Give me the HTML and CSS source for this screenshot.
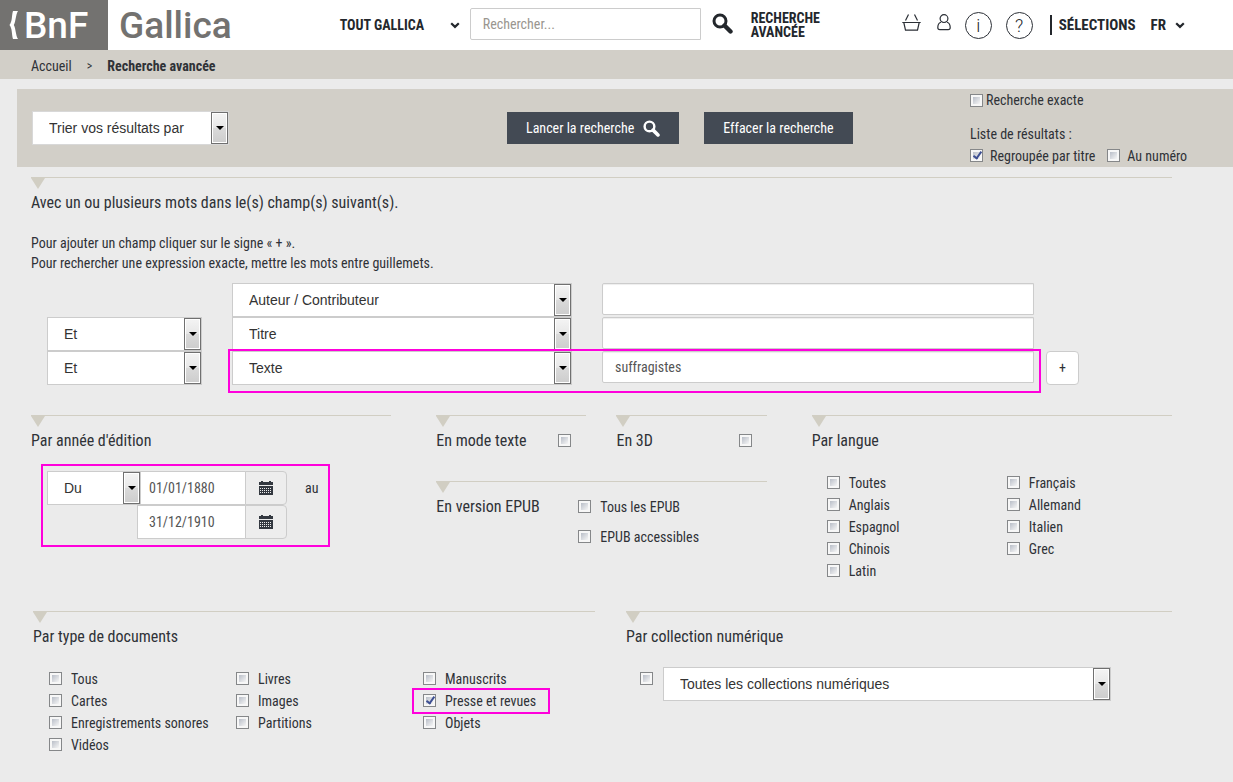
FILE: index.html
```html
<!DOCTYPE html>
<html lang="fr">
<head>
<meta charset="utf-8">
<title>Gallica - Recherche avancée</title>
<link rel="stylesheet" href="styles.css">
</head>
<body>
<svg class="defs" aria-hidden="true">
  <symbol id="magnifier" viewBox="0 0 21 21"><circle cx="8" cy="8" r="6" fill="none" stroke="currentColor" stroke-width="3"/><path d="M12.5 12.5 L18.5 18.5" stroke="currentColor" stroke-width="4.4" stroke-linecap="round"/></symbol>
  <symbol id="chevron" viewBox="0 0 10 7"><path d="M1.2 1.2 L5 4.9 L8.8 1.2" fill="none" stroke="currentColor" stroke-width="2.2"/></symbol>
  <symbol id="calendar" viewBox="0 0 14 14"><path fill="currentColor" d="M0 1h2V0h2v1h6V0h2v1h2v3H0zM0 5h14v9H0z"/><path d="M1 7.500h12M1 9.500h12M1 11.500h12" stroke="#ededed" stroke-width="1" stroke-dasharray="1 1"/></symbol>
</svg>

<header class="topbar">
  <a class="bnf" href="#" aria-label="BnF"><svg class="brace" viewBox="0 0 9 28"><path d="M4 0H9C6.500 4 7 10 4.800 14C7 18 6.500 24 9 28H4C2.500 23 3.500 18 .5 14C3.500 10 2.500 5 4 0z" fill="#fff"/></svg><span>BnF</span></a>
  <a class="gallica" href="#">Gallica</a>
  <div class="search">
    <button class="scope" type="button">TOUT GALLICA <svg class="chevron"><use href="#chevron"/></svg></button>
    <input class="search-box" type="text" placeholder="Rechercher..." aria-label="Rechercher">
    <button class="search-go" type="button" aria-label="Lancer"><svg class="glass-lg"><use href="#magnifier"/></svg></button>
    <a class="advanced" href="#">RECHERCHE<br>AVANCÉE</a>
  </div>
  <nav class="tools">
    <a class="basket" href="#" aria-label="Panier"><svg viewBox="0 0 19 17"><path d="M.3 8.500h18.400M1.800 8.500l1.700 7.700h12l1.700-7.700M3.500 6.500L6.500.5M15.500 6.500L12.500.5" fill="none" stroke="#2b2f36" stroke-width="1.200"/></svg></a>
    <a class="user" href="#" aria-label="Mon espace"><svg viewBox="0 0 14 17"><circle cx="7" cy="4.600" r="3.900" fill="none" stroke="#2b2f36" stroke-width="1.200"/><path d="M4 8.300C1.800 9 .8 11 .8 13.500c0 1.500.8 2.200 2 2.200h8.400c1.200 0 2-.7 2-2.200 0-2.500-1-4.500-3.200-5.200" fill="none" stroke="#2b2f36" stroke-width="1.200"/></svg></a>
    <a class="round" href="#">i</a>
    <a class="round" href="#">?</a>
    <a class="selections" href="#">SÉLECTIONS</a>
    <button class="lang" type="button">FR <svg class="chevron"><use href="#chevron"/></svg></button>
  </nav>
</header>

<nav class="crumbs" aria-label="Fil d'Ariane"><a href="#">Accueil</a><span class="sep">&gt;</span><strong>Recherche avancée</strong></nav>

<form class="page">
  <div class="actions">
    <span class="select sort"><select aria-label="Trier"><option>Trier vos résultats par</option></select></span>
    <div class="buttons">
      <button class="btn" type="button">Lancer la recherche <svg class="glass-sm"><use href="#magnifier"/></svg></button>
      <button class="btn" type="button">Effacer la recherche</button>
    </div>
    <div class="options">
      <label class="exact"><input type="checkbox">Recherche exacte</label>
      <span class="list-title">Liste de résultats :</span>
      <div class="list-modes">
        <label class="check"><input type="checkbox" checked>Regroupée par titre</label>
        <label class="check"><input type="checkbox">Au numéro</label>
      </div>
    </div>
  </div>

  <div class="content">
    <section class="block">
      <h2>Avec un ou plusieurs mots dans le(s) champ(s) suivant(s).</h2>
      <p class="help">Pour ajouter un champ cliquer sur le signe « + ».<br>Pour rechercher une expression exacte, mettre les mots entre guillemets.</p>
      <div class="criteria">
        <div class="pair">
          <span class="select"><select aria-label="Champ 1"><option>Auteur / Contributeur</option></select></span>
          <input class="text" type="text" aria-label="Valeur 1">
        </div>
        <span class="select op"><select aria-label="Opérateur 2"><option>Et</option></select></span>
        <div class="pair">
          <span class="select"><select aria-label="Champ 2"><option>Titre</option></select></span>
          <input class="text" type="text" aria-label="Valeur 2">
        </div>
        <span class="select op"><select aria-label="Opérateur 3"><option>Et</option></select></span>
        <div class="pair marked mark-pair">
          <span class="select"><select aria-label="Champ 3"><option>Texte</option></select></span>
          <input class="text" type="text" value="suffragistes" aria-label="Valeur 3">
        </div>
        <button class="plus" type="button">+</button>
      </div>
    </section>

    <div class="row three">
      <section class="block">
        <h2>Par année d'édition</h2>
        <div class="dates marked mark-dates">
          <div class="date-line">
            <span class="select period"><select aria-label="Période"><option>Du</option></select></span>
            <input class="date" type="text" value="01/01/1880" aria-label="Date de début">
            <button class="cal" type="button" aria-label="Calendrier de début"><svg><use href="#calendar"/></svg></button>
            <span class="until">au</span>
          </div>
          <div class="date-line second">
            <input class="date" type="text" value="31/12/1910" aria-label="Date de fin">
            <button class="cal" type="button" aria-label="Calendrier de fin"><svg><use href="#calendar"/></svg></button>
          </div>
        </div>
      </section>
      <div class="middle">
        <section class="block"><label class="toggle">En mode texte <input type="checkbox"></label></section>
        <section class="block"><label class="toggle">En 3D <input type="checkbox"></label></section>
        <section class="block epub">
          <h2>En version EPUB</h2>
          <div class="epub-list">
            <label class="check"><input type="checkbox">Tous les EPUB</label>
            <label class="check"><input type="checkbox">EPUB accessibles</label>
          </div>
        </section>
      </div>
      <section class="block">
        <h2>Par langue</h2>
        <div class="checks languages">
          <label class="check"><input type="checkbox">Toutes</label>
          <label class="check"><input type="checkbox">Français</label>
          <label class="check"><input type="checkbox">Anglais</label>
          <label class="check"><input type="checkbox">Allemand</label>
          <label class="check"><input type="checkbox">Espagnol</label>
          <label class="check"><input type="checkbox">Italien</label>
          <label class="check"><input type="checkbox">Chinois</label>
          <label class="check"><input type="checkbox">Grec</label>
          <label class="check"><input type="checkbox">Latin</label>
        </div>
      </section>
    </div>

    <div class="row two">
      <section class="block">
        <h2>Par type de documents</h2>
        <div class="checks types">
          <label class="check"><input type="checkbox">Tous</label>
          <label class="check"><input type="checkbox">Livres</label>
          <label class="check"><input type="checkbox">Manuscrits</label>
          <label class="check"><input type="checkbox">Cartes</label>
          <label class="check"><input type="checkbox">Images</label>
          <label class="check marked mark-type"><input type="checkbox" checked>Presse et revues</label>
          <label class="check"><input type="checkbox">Enregistrements sonores</label>
          <label class="check"><input type="checkbox">Partitions</label>
          <label class="check"><input type="checkbox">Objets</label>
          <label class="check"><input type="checkbox">Vidéos</label>
        </div>
      </section>
      <section class="block">
        <h2>Par collection numérique</h2>
        <div class="collection">
          <input type="checkbox" aria-label="Limiter à une collection">
          <span class="select"><select aria-label="Collection"><option>Toutes les collections numériques</option></select></span>
        </div>
      </section>
    </div>
  </div>
</form>
</body>
</html>
```
FILE: styles.css
```css
*, *::before, *::after { box-sizing: border-box; }

body {
  margin: 0;
  background: #ebebeb;
  color: #2f3237;
  font: 14px/22px "Roboto Condensed", "Liberation Sans Narrow", Roboto, sans-serif;
}

a { color: inherit; text-decoration: none; }
button, input { font: inherit; color: inherit; }
button { padding: 0; border: 0; background: none; white-space: nowrap; }
.defs { display: none; }

/* Top bar */
.topbar {
  display: flex;
  align-items: center;
  height: 50px;
  background: #fff;
  color: #23272c;
}
.bnf {
  display: flex;
  align-items: center;
  gap: 6px;
  width: 108px;
  height: 50px;
  padding-left: 9px;
  background: #737270;
  color: #fff;
}
.brace { width: 9px; height: 28px; }
.bnf, .gallica { font-family: Roboto, sans-serif; font-size: 37px; line-height: 50px; font-weight: 500; }
.bnf span, .gallica { padding-top: 2px; }
.gallica { margin-left: 11px; color: #737270; }
.search { display: flex; flex: 1; align-items: center; margin-left: 108px; font-weight: 700; }
.scope { display: flex; align-items: center; justify-content: space-between; width: 120px; font-weight: 700; }
.chevron { width: 10px; height: 7px; }
.search-box {
  width: 231px;
  height: 32px;
  margin: 0 11px 2px 10px;
  padding: 0 12px;
  border: 1px solid #ccc;
  border-radius: 2px 0 0 2px;
  background: #fff;
  font-weight: 400;
}
.search-box::placeholder { color: #9a968f; }
.search-go, .search-go svg { display: block; width: 21px; height: 21px; }
.search-go { margin-bottom: 4px; }
.advanced { margin-left: 18px; line-height: 14px; }
.tools { display: flex; align-items: center; padding-right: 48px; font-size: 15px; font-weight: 700; }
.tools svg { display: block; }
.basket svg { width: 19px; height: 17px; }
.user { margin: 0 14px 0 16px; }
.user svg { width: 14px; height: 17px; }
.basket, .user { padding-bottom: 6px; }
.round {
  width: 27px;
  height: 27px;
  margin-right: 14px;
  border: 1px solid #2b2f36;
  border-radius: 50%;
  font: 300 18px/25px Roboto, sans-serif;
  text-align: center;
}
.selections { margin: 0 15px 0 3px; padding-left: 7px; border-left: 2px solid #23272c; line-height: 20px; }
.lang { display: flex; align-items: center; gap: 9px; font-weight: 700; }

.crumbs { display: flex; padding: 5px 31px 2px; background: #d2cfc8; }
.sep { margin: 0 15px; font-size: 12px; }

/* Action bar */
.page { padding: 10px 0 26px 17px; }
.actions {
  display: grid;
  grid-template-columns: 475fr 463fr 263fr;
  align-items: center;
  height: 78px;
  padding-left: 15px;
  background: #d2cfc8;
}
.buttons { display: flex; gap: 25px; }
.btn {
  display: flex;
  align-items: center;
  gap: 9px;
  height: 32px;
  padding: 0 19px;
  background: #434a54;
  color: #fff;
}
.glass-sm { width: 17px; height: 17px; }
.options { display: flex; flex-direction: column; }
.exact { display: flex; align-items: center; gap: 3px; margin-bottom: 12px; }
.list-modes { display: flex; gap: 12px; }
.list-modes .check { gap: 7px; }

/* Form controls */
.select { position: relative; display: block; }
.select select {
  display: block;
  width: 100%;
  height: 34px;
  padding: 0 24px 0 16px;
  border: 1px solid #ccc;
  border-radius: 0;
  background: #fff;
  color: #333;
  font: 14px "Liberation Sans", Arial, sans-serif;
  appearance: none;
}
.select::before {
  content: "";
  position: absolute;
  inset: 1px 1px 1px auto;
  width: 17px;
  border: 1px solid #707070;
  background: linear-gradient(#f4f4f4, #e8e8e8 48%, #dadada 50%, #cdcdcd);
  box-shadow: inset 0 0 0 1px #fff;
  pointer-events: none;
}
.select::after {
  content: "";
  position: absolute;
  top: 50%;
  right: 5px;
  margin-top: -2px;
  border: solid transparent;
  border-width: 4px 4px 0;
  border-top-color: #000;
  pointer-events: none;
}
.sort { width: 197px; }
.sort select { border-color: #d8d8d8; }

input[type="checkbox"] {
  position: relative;
  flex: none;
  width: 13px;
  height: 13px;
  margin: 0;
  padding: 2px;
  border: 1px solid #858789;
  background: linear-gradient(135deg, #b9bec8, #f6f6f6) content-box, #f7f7f7;
  appearance: none;
}
input[type="checkbox"]:checked::after {
  content: "";
  position: absolute;
  left: 4px;
  top: 0;
  width: 5px;
  height: 9px;
  border: solid #3d4f92;
  border-width: 0 2px 2px 0;
  transform: rotate(35deg);
}
.check { display: flex; align-items: center; gap: 9px; justify-self: start; white-space: nowrap; }
.check input[type="checkbox"] { margin-bottom: 2px; }

.text, .date { min-width: 0; border: 1px solid #ccc; background: #fff; color: #555; }
.text { width: 100%; height: 32px; padding: 0 12px; border-radius: 2px 0 0 2px; box-shadow: inset 0 1px 1px #eee; }

/* Sections */
.content { margin: 10px 61px 0 14px; }
.block { position: relative; padding-top: 14px; border-top: 1px solid #d1cec3; }
.block::before {
  content: "";
  position: absolute;
  top: 0;
  left: 0;
  border: solid transparent;
  border-width: 11px 7px 0;
  border-top-color: #d1cec3;
}
h2, .toggle { margin: 0; font-size: 16px; line-height: 22px; font-weight: 400; }
.help { margin: 19px 0 10px; line-height: 20px; }
.row { display: grid; margin-top: 30px; }

.criteria {
  display: grid;
  grid-template-columns: 155px 1fr 33px;
  column-gap: 30px;
  padding: 0 93px 0 16px;
}
.pair { display: grid; grid-column: 2; grid-template-columns: 340fr 432fr; gap: 30px; margin-right: -18px; }
.op { grid-column: 1; }
.plus { height: 34px; border: 1px solid #ccc; border-radius: 4px; background: #fff; }

.three { grid-template-columns: 12fr 11fr 12fr; column-gap: 45px; }
.middle { display: grid; grid-template-columns: 1fr 1fr; gap: 29px 30px; align-content: start; }
.toggle { display: flex; align-items: center; justify-content: space-between; padding-right: 15px; }
.toggle input[type="checkbox"] { margin-bottom: 2px; }
.epub { display: grid; grid-column: 1 / -1; grid-template-columns: 142px 1fr; }
.epub-list { display: grid; gap: 8px; }

.dates { width: 272px; margin: 19px 0 0 16px; }
.date-line { display: flex; align-items: center; }
.second { padding-left: 90px; }
.period { width: 94px; }
.date { flex: none; width: 105px; height: 34px; padding: 0 8px; border-left: 0; }
.second .date { width: 109px; padding-left: 11px; border-left: 1px solid #ccc; }
.cal {
  display: grid;
  place-items: center;
  width: 42px;
  height: 34px;
  margin-left: -1px;
  border: 1px solid #ccc;
  border-radius: 0 4px 4px 0;
  background: #ededed;
}
.cal svg { width: 14px; height: 14px; color: #333840; }
.until { margin-left: 18px; }

.checks { display: grid; margin-top: 20px; }
.languages { grid-template-columns: 180fr 165fr; margin-bottom: -1px; padding-left: 15px; }
.types { grid-template-columns: 187fr 187fr 172fr; padding-left: 16px; }

.two { grid-template-columns: 562fr 546fr; column-gap: 31px; padding-left: 2px; }
.collection { display: flex; align-items: center; gap: 10px; margin-top: 19px; padding: 0 61px 0 14px; }
.collection .select { flex: 1; }
.collection > input { margin-bottom: 12px; }

/* Highlight frames */
.marked { position: relative; }
.marked::after { content: ""; position: absolute; border: 2px solid #ff00dc; pointer-events: none; }
.mark-pair::after { inset: -2px -7px -8px -4px; }
.mark-dates::after { inset: -7px -11px -8px -6px; }
.mark-type::after { inset: -2px -14px -2px -11px; }
```
